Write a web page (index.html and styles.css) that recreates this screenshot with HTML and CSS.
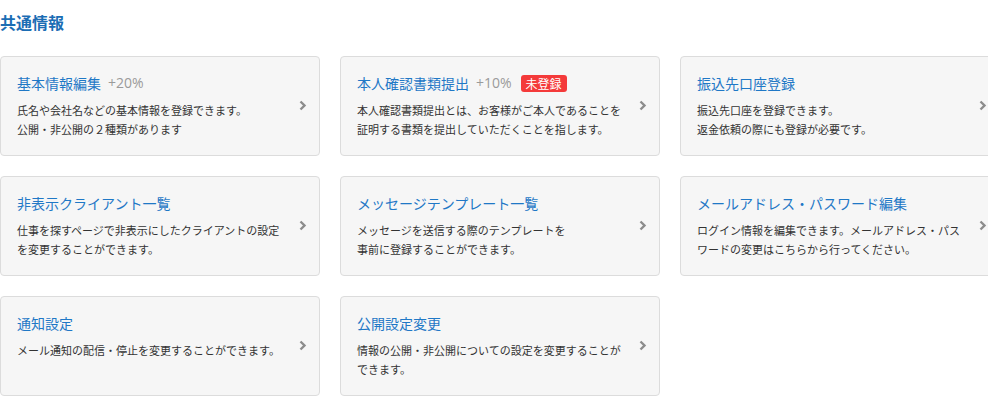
FILE: index.html
```html
<!DOCTYPE html>
<html lang="ja">
<head>
<meta charset="utf-8">
<title>共通情報</title>
<link rel="stylesheet" href="styles.css">
</head>
<body>
<section class="section">
  <h2 class="section-title">共通情報</h2>
  <div class="card-grid">
    <a class="card" href="#">
      <div class="card-body">
        <div class="card-head"><span class="card-title">基本情報編集</span><span class="card-rate">+20%</span></div>
        <p class="card-desc">氏名や会社名などの基本情報を登録できます。<br>公開・非公開の２種類があります</p>
      </div>
      <svg class="chev" width="8" height="11" viewBox="0 0 8 11"><polyline points="1.5,1.5 5.5,5.5 1.5,9.5" fill="none" stroke="#8c8c8c" stroke-width="2.4"/></svg>
    </a>
    <a class="card" href="#">
      <div class="card-body">
        <div class="card-head"><span class="card-title">本人確認書類提出</span><span class="card-rate">+10%</span><span class="badge">未登録</span></div>
        <p class="card-desc">本人確認書類提出とは、お客様がご本人であることを<br>証明する書類を提出していただくことを指します。</p>
      </div>
      <svg class="chev" width="8" height="11" viewBox="0 0 8 11"><polyline points="1.5,1.5 5.5,5.5 1.5,9.5" fill="none" stroke="#8c8c8c" stroke-width="2.4"/></svg>
    </a>
    <a class="card" href="#">
      <div class="card-body">
        <div class="card-head"><span class="card-title">振込先口座登録</span></div>
        <p class="card-desc">振込先口座を登録できます。<br>返金依頼の際にも登録が必要です。</p>
      </div>
      <svg class="chev" width="8" height="11" viewBox="0 0 8 11"><polyline points="1.5,1.5 5.5,5.5 1.5,9.5" fill="none" stroke="#8c8c8c" stroke-width="2.4"/></svg>
    </a>
    <a class="card" href="#">
      <div class="card-body">
        <div class="card-head"><span class="card-title">非表示クライアント一覧</span></div>
        <p class="card-desc">仕事を探すページで非表示にしたクライアントの設定<br>を変更することができます。</p>
      </div>
      <svg class="chev" width="8" height="11" viewBox="0 0 8 11"><polyline points="1.5,1.5 5.5,5.5 1.5,9.5" fill="none" stroke="#8c8c8c" stroke-width="2.4"/></svg>
    </a>
    <a class="card" href="#">
      <div class="card-body">
        <div class="card-head"><span class="card-title">メッセージテンプレート一覧</span></div>
        <p class="card-desc">メッセージを送信する際のテンプレートを<br>事前に登録することができます。</p>
      </div>
      <svg class="chev" width="8" height="11" viewBox="0 0 8 11"><polyline points="1.5,1.5 5.5,5.5 1.5,9.5" fill="none" stroke="#8c8c8c" stroke-width="2.4"/></svg>
    </a>
    <a class="card" href="#">
      <div class="card-body">
        <div class="card-head"><span class="card-title">メールアドレス・パスワード編集</span></div>
        <p class="card-desc">ログイン情報を編集できます。メールアドレス・パス<br>ワードの変更はこちらから行ってください。</p>
      </div>
      <svg class="chev" width="8" height="11" viewBox="0 0 8 11"><polyline points="1.5,1.5 5.5,5.5 1.5,9.5" fill="none" stroke="#8c8c8c" stroke-width="2.4"/></svg>
    </a>
    <a class="card" href="#">
      <div class="card-body">
        <div class="card-head"><span class="card-title">通知設定</span></div>
        <p class="card-desc">メール通知の配信・停止を変更することができます。</p>
      </div>
      <svg class="chev" width="8" height="11" viewBox="0 0 8 11"><polyline points="1.5,1.5 5.5,5.5 1.5,9.5" fill="none" stroke="#8c8c8c" stroke-width="2.4"/></svg>
    </a>
    <a class="card" href="#">
      <div class="card-body">
        <div class="card-head"><span class="card-title">公開設定変更</span></div>
        <p class="card-desc">情報の公開・非公開についての設定を変更することが<br>できます。</p>
      </div>
      <svg class="chev" width="8" height="11" viewBox="0 0 8 11"><polyline points="1.5,1.5 5.5,5.5 1.5,9.5" fill="none" stroke="#8c8c8c" stroke-width="2.4"/></svg>
    </a>
  </div>
</section>
</body>
</html>
```

FILE: styles.css
```css
html {
  overflow: hidden;
}
body {
  margin: 0;
  background: #fff;
  color: #333;
  font-family: "Noto Sans CJK JP", "Noto Sans", sans-serif;
}
.section {
  width: 1000px;
}
.section-title {
  margin: 10px 0 22px;
  font-size: 16px;
  line-height: 24px;
  font-weight: bold;
  color: #1b6db4;
}
.card-grid {
  display: grid;
  grid-template-columns: repeat(3, 320px);
  column-gap: 20px;
  row-gap: 20px;
}
.card {
  box-sizing: border-box;
  height: 100px;
  display: flex;
  align-items: center;
  padding: 0 12px 0 16px;
  background: #f6f6f6;
  border: 1px solid #dcdcdc;
  border-radius: 4px;
  text-decoration: none;
  color: #333;
}
.card-body {
  flex: 1;
  align-self: flex-start;
  padding-top: 16px;
}
.card-head {
  display: flex;
  align-items: center;
  height: 20px;
}
.card-title {
  font-size: 14px;
  line-height: 20px;
  color: #1f78c6;
}
.card-rate {
  margin-left: 7px;
  font-family: "Open Sans", "Noto Sans", sans-serif;
  font-size: 14px;
  line-height: 20px;
  color: #9a9a9a;
}
.badge {
  margin-left: 9px;
  padding: 0 5px;
  height: 17px;
  line-height: 17px;
  font-size: 12px;
  color: #fff;
  background: #f43a3a;
  border-radius: 3px;
}
.card-desc {
  margin: 8px 0 0;
  font-size: 11px;
  line-height: 18.7px;
  color: #333;
  white-space: nowrap;
}
.chev {
  flex: none;
  margin-left: 12px;
  margin-bottom: 2px;
}
```
